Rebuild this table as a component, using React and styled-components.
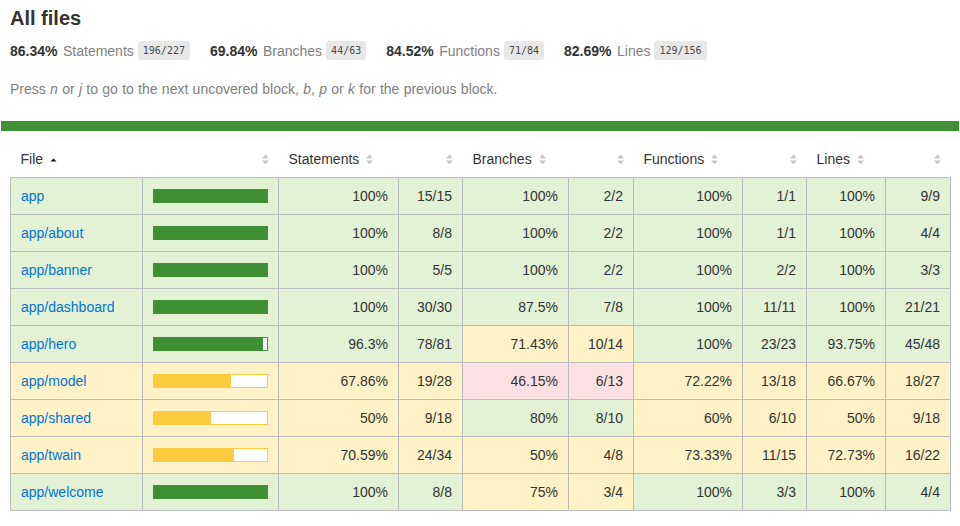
import React from 'react';
import styled, { createGlobalStyle } from 'styled-components';

const C = {
  text: '#333',
  quiet: '#7f7f7f',
  border: '#bbb',
  link: '#0074d9',
  highBg: '#e3f2d5',
  highFill: '#3f8f34',
  medBg: '#fff2c6',
  medFill: '#fdca40',
  lowBg: '#fde0e4',
  lowFill: '#c21f39',
};

const Global = createGlobalStyle`
  html, body { margin: 0; padding: 0; background: #fff; }
  body {
    font-family: "Liberation Sans", Arial, Helvetica, sans-serif;
    font-size: 14px;
    color: ${C.text};
  }
`;

const Header = styled.div`
  padding: 7px 10px 0;
`;

const Title = styled.h1`
  margin: 0;
  font-size: 20px;
  line-height: 23px;
  font-weight: bold;
  color: ${C.text};
`;

const Summary = styled.div`
  display: flex;
  align-items: center;
  margin-top: 11px;
  height: 19px;
`;

const Stat = styled.div`
  display: flex;
  align-items: center;
  padding-right: 20px;
  white-space: nowrap;
  line-height: 16px;
`;

const Strong = styled.span`
  font-weight: bold;
`;

const Quiet = styled.span`
  color: ${C.quiet};
  margin-left: 5.5px;
`;

const Fraction = styled.span`
  display: inline-block;
  margin-left: 4px;
  font-family: "DejaVu Sans Mono", "Liberation Mono", monospace;
  font-size: 10px;
  line-height: 15px;
  padding: 2px 5px;
  background: #e8e8e8;
  border-radius: 3px;
  color: #4a4a4a;
`;

const Hint = styled.p`
  margin: 21px 0 0;
  line-height: 16px;
  word-spacing: 0.4px;
  color: ${C.quiet};
`;

const StatusLine = styled.div`
  height: 10px;
  margin: 24px 1px 0;
  background: ${C.highFill};
`;

const Table = styled.table`
  border-collapse: collapse;
  table-layout: fixed;
  width: 941px;
  margin: 10px 10px;
`;

const Th = styled.th`
  padding: 10px;
  line-height: 16px;
  font-weight: normal;
  text-align: ${p => (p.$right ? 'right' : 'left')};
  color: ${C.text};
  white-space: nowrap;
`;

const Td = styled.td`
  padding: 10px;
  line-height: 16px;
  border: 1px solid ${C.border};
  text-align: ${p => (p.$right ? 'right' : 'left')};
  background: ${p => (p.$level === 'high' ? C.highBg : p.$level === 'medium' ? C.medBg : C.lowBg)};
  white-space: nowrap;
  vertical-align: middle;
`;

const FileLink = styled.a`
  color: ${C.link};
  text-decoration: none;
`;

const Chart = styled.div`
  display: flex;
  width: 113px;
  height: 12px;
  border: 1px solid ${p => p.$color};
  background: #fff;
`;

const Fill = styled.div`
  height: 100%;
  background: ${p => p.$color};
`;

const SortIcon = styled.svg`
  display: inline-block;
  width: 7px;
  height: 11px;
  margin-left: ${p => (p.$bare ? '0' : '7px')};
  vertical-align: -1px;
`;

function Sorter({ active, bare }) {
  return (
    <SortIcon viewBox="0 0 7 11" $bare={bare}>
      {active ? (
        <polygon points="0.5,7.5 6.5,7.5 3.5,4.5" fill="#111" />
      ) : (
        <>
          <polygon points="3.5,0.5 6.8,4.2 0.2,4.2" fill="#c4c4c4" />
          <polygon points="0.2,6.6 6.8,6.6 3.5,10.3" fill="#c4c4c4" />
        </>
      )}
    </SortIcon>
  );
}

const level = pct => (pct >= 80 ? 'high' : pct >= 50 ? 'medium' : 'low');
const fillColor = l => (l === 'high' ? C.highFill : l === 'medium' ? C.medFill : C.lowFill);

const rows = [
  ['app', [100, '15/15'], [100, '2/2'], [100, '1/1'], [100, '9/9']],
  ['app/about', [100, '8/8'], [100, '2/2'], [100, '1/1'], [100, '4/4']],
  ['app/banner', [100, '5/5'], [100, '2/2'], [100, '2/2'], [100, '3/3']],
  ['app/dashboard', [100, '30/30'], [87.5, '7/8'], [100, '11/11'], [100, '21/21']],
  ['app/hero', [96.3, '78/81'], [71.43, '10/14'], [100, '23/23'], [93.75, '45/48']],
  ['app/model', [67.86, '19/28'], [46.15, '6/13'], [72.22, '13/18'], [66.67, '18/27']],
  ['app/shared', [50, '9/18'], [80, '8/10'], [60, '6/10'], [50, '9/18']],
  ['app/twain', [70.59, '24/34'], [50, '4/8'], [73.33, '11/15'], [72.73, '16/22']],
  ['app/welcome', [100, '8/8'], [75, '3/4'], [100, '3/3'], [100, '4/4']],
];

const widths = [132, 136, 120, 64, 106, 65, 109, 64, 79, 65];

const stats = [
  ['86.34%', 'Statements', '196/227'],
  ['69.84%', 'Branches', '44/63'],
  ['84.52%', 'Functions', '71/84'],
  ['82.69%', 'Lines', '129/156'],
];

export default function App() {
  return (
    <>
      <Global />
      <Header>
        <Title>All files</Title>
        <Summary>
          {stats.map(([pct, label, frac]) => (
            <Stat key={label}>
              <Strong>{pct}</Strong>
              <Quiet>{label}</Quiet>
              <Fraction>{frac}</Fraction>
            </Stat>
          ))}
        </Summary>
        <Hint>
          Press <em>n</em> or <em>j</em> to go to the next uncovered block, <em>b</em>, <em>p</em> or{' '}
          <em>k</em> for the previous block.
        </Hint>
      </Header>
      <StatusLine />
      <Table>
        <colgroup>
          {widths.map((w, i) => (
            <col key={i} style={{ width: w }} />
          ))}
        </colgroup>
        <thead>
          <tr>
            <Th>File<Sorter active /></Th>
            <Th $right><Sorter bare /></Th>
            <Th>Statements<Sorter /></Th>
            <Th $right><Sorter bare /></Th>
            <Th>Branches<Sorter /></Th>
            <Th $right><Sorter bare /></Th>
            <Th>Functions<Sorter /></Th>
            <Th $right><Sorter bare /></Th>
            <Th>Lines<Sorter /></Th>
            <Th $right><Sorter bare /></Th>
          </tr>
        </thead>
        <tbody>
          {rows.map(([name, ...metrics]) => {
            const sl = level(metrics[0][0]);
            return (
              <tr key={name}>
                <Td $level={sl}>
                  <FileLink href="#">{name}</FileLink>
                </Td>
                <Td $level={sl}>
                  <Chart $color={fillColor(sl)}>
                    <Fill $color={fillColor(sl)} style={{ width: `${metrics[0][0]}%` }} />
                  </Chart>
                </Td>
                {metrics.map(([pct, abs], i) => (
                  <React.Fragment key={i}>
                    <Td $level={level(pct)} $right>{pct}%</Td>
                    <Td $level={level(pct)} $right>{abs}</Td>
                  </React.Fragment>
                ))}
              </tr>
            );
          })}
        </tbody>
      </Table>
    </>
  );
}
